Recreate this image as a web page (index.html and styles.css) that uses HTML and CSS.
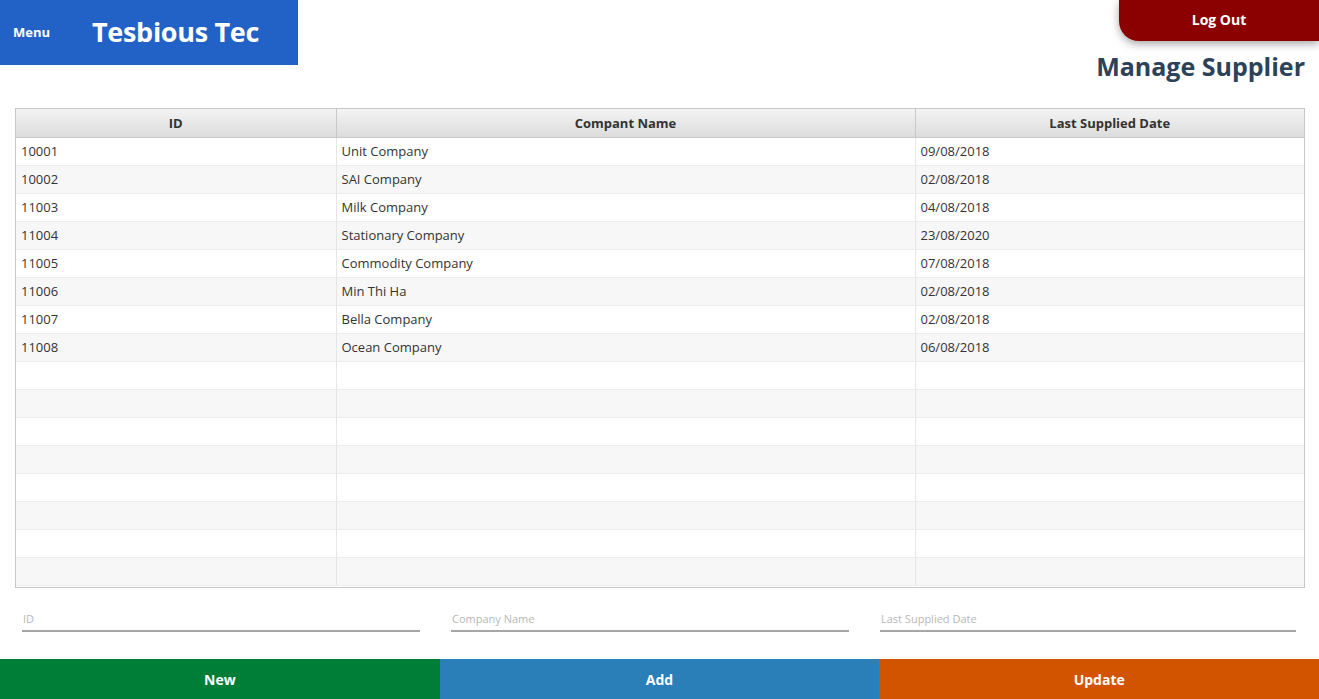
FILE: index.html
```html
<!DOCTYPE html>
<html>
<head>
<meta charset="utf-8">
<title>Manage Supplier</title>
<link rel="stylesheet" href="styles.css">
</head>
<body>
<div class="page">
  <header class="topbar">
    <div class="brand">
      <span class="menu">Menu</span>
      <span class="logo">Tesbious Tec</span>
    </div>
    <div class="right">
      <button class="logout">Log Out</button>
      <h1 class="title">Manage Supplier</h1>
    </div>
  </header>

  <main class="content">
    <div class="table-wrap">
      <table class="grid">
        <colgroup>
          <col class="c1"><col class="c2"><col class="c3">
        </colgroup>
        <thead>
          <tr><th>ID</th><th>Compant Name</th><th>Last Supplied Date</th></tr>
        </thead>
        <tbody>
          <tr><td>10001</td><td>Unit Company</td><td>09/08/2018</td></tr>
          <tr><td>10002</td><td>SAI Company</td><td>02/08/2018</td></tr>
          <tr><td>11003</td><td>Milk Company</td><td>04/08/2018</td></tr>
          <tr><td>11004</td><td>Stationary Company</td><td>23/08/2020</td></tr>
          <tr><td>11005</td><td>Commodity Company</td><td>07/08/2018</td></tr>
          <tr><td>11006</td><td>Min Thi Ha</td><td>02/08/2018</td></tr>
          <tr><td>11007</td><td>Bella Company</td><td>02/08/2018</td></tr>
          <tr><td>11008</td><td>Ocean Company</td><td>06/08/2018</td></tr>
          <tr><td></td><td></td><td></td></tr>
          <tr><td></td><td></td><td></td></tr>
          <tr><td></td><td></td><td></td></tr>
          <tr><td></td><td></td><td></td></tr>
          <tr><td></td><td></td><td></td></tr>
          <tr><td></td><td></td><td></td></tr>
          <tr><td></td><td></td><td></td></tr>
          <tr><td></td><td></td><td></td></tr>
        </tbody>
      </table>
    </div>

    <form class="fields">
      <input class="field" type="text" placeholder="ID">
      <input class="field" type="text" placeholder="Company Name">
      <input class="field" type="text" placeholder="Last Supplied Date">
    </form>
  </main>

  <footer class="actions">
    <button class="act new">New</button>
    <button class="act add">Add</button>
    <button class="act update">Update</button>
  </footer>
</div>
</body>
</html>
```

FILE: styles.css
```css
* { box-sizing: border-box; }

html, body {
  margin: 0;
  padding: 0;
  background: #ffffff;
}

body {
  font-family: "Open Sans", "Noto Sans", sans-serif;
  color: #333333;
}

.page {
  width: 1319px;
  height: 699px;
  display: flex;
  flex-direction: column;
  overflow: hidden;
}

.topbar {
  display: flex;
  justify-content: space-between;
  align-items: flex-start;
  height: 108px;
}

.brand {
  width: 298px;
  height: 65px;
  background: #2262c6;
  color: #ffffff;
  display: flex;
  align-items: center;
  padding-left: 13px;
  padding-bottom: 3px;
}

.menu {
  font-weight: 700;
  font-size: 13px;
  width: 79px;
  padding-top: 2px;
}

.logo {
  font-weight: 700;
  font-size: 27px;
  letter-spacing: -0.3px;
}

.right {
  display: flex;
  flex-direction: column;
  align-items: flex-end;
}

.logout {
  width: 200px;
  height: 41px;
  border: none;
  background: #8b0000;
  color: #ffffff;
  font-family: inherit;
  font-weight: 700;
  font-size: 14px;
  border-bottom-left-radius: 20px;
  box-shadow: 0 3px 8px rgba(0, 0, 0, 0.35);
  padding: 0 0 2px 0;
}

.title {
  margin: 10px 14px 0 0;
  font-size: 25px;
  line-height: 30px;
  font-weight: 700;
  color: #2c4258;
}

.content {
  flex: 1;
  display: flex;
  flex-direction: column;
}

.table-wrap {
  margin: 0 14px 0 15px;
  border: 1px solid #c8c8c8;
  height: 480px;
  overflow: hidden;
}

.grid {
  width: 100%;
  border-collapse: collapse;
  table-layout: fixed;
  font-size: 13px;
}

.c1 { width: 320px; }
.c2 { width: 579px; }

.grid th {
  height: 28px;
  font-weight: 700;
  color: #333333;
  background: linear-gradient(#f3f3f3, #dcdcdc);
  border-right: 1px solid #c8c8c8;
  border-bottom: 1px solid #c8c8c8;
  padding: 0;
}

.grid th:last-child,
.grid td:last-child {
  border-right: none;
}

.grid td {
  height: 28px;
  padding: 0 5px;
  border-right: 1px solid #e6e6e6;
  border-bottom: 1px solid #ececec;
  white-space: nowrap;
}

.grid tbody tr:nth-child(even) td {
  background: #f7f7f7;
}

.fields {
  display: grid;
  grid-template-columns: 398px 398px 1fr;
  column-gap: 31px;
  padding: 20px 23px 0 22px;
  margin: 0;
}

.field {
  height: 24px;
  border: none;
  border-bottom: 2px solid #a6a6a6;
  font-family: inherit;
  font-size: 11px;
  padding: 0 1px 2px 1px;
  background: transparent;
  color: #333333;
  outline: none;
}

.field::placeholder {
  color: #b8b8b8;
}

.actions {
  display: flex;
  height: 40px;
}

.act {
  flex: 1;
  border: none;
  color: #ffffff;
  font-family: inherit;
  font-weight: 700;
  font-size: 14px;
  padding: 0;
}

.new { background: #007d36; }
.add { background: #2a7fb8; }
.update { background: #d35400; }
```
